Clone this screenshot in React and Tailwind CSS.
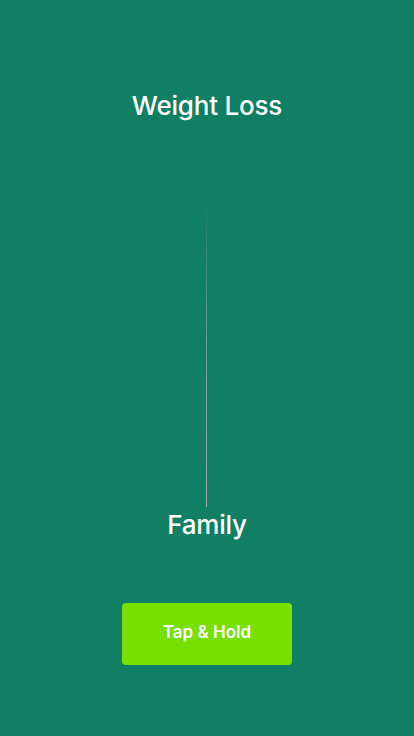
export default function App() {
  return (
    <div
      className="w-[414px] h-[736px] bg-[#107f63] flex flex-col items-center pt-[90px]"
      style={{ fontFamily: 'Inter, "Noto Sans", sans-serif' }}
    >
      {/* top label */}
      <h1 className="text-white text-[26px] leading-[32px] font-medium tracking-[-0.2px]">Weight Loss</h1>

      {/* vertical divider */}
      <div className="mt-[73px] self-start ml-[206px] w-px h-[312px] bg-gradient-to-b from-[#a8a8a8]/0 via-[#a8a8a8]/70 to-[#a8a8a8]" />

      {/* bottom label */}
      <h2 className="mt-[2px] text-white text-[26px] leading-[32px] font-medium tracking-[-0.2px]">Family</h2>

      <button className="mt-[62px] w-[170px] h-[62px] rounded bg-[#77e000] text-white text-[17px] leading-[20px] font-semibold pb-[4px]">
        Tap &amp; Hold
      </button>
    </div>
  );
}
